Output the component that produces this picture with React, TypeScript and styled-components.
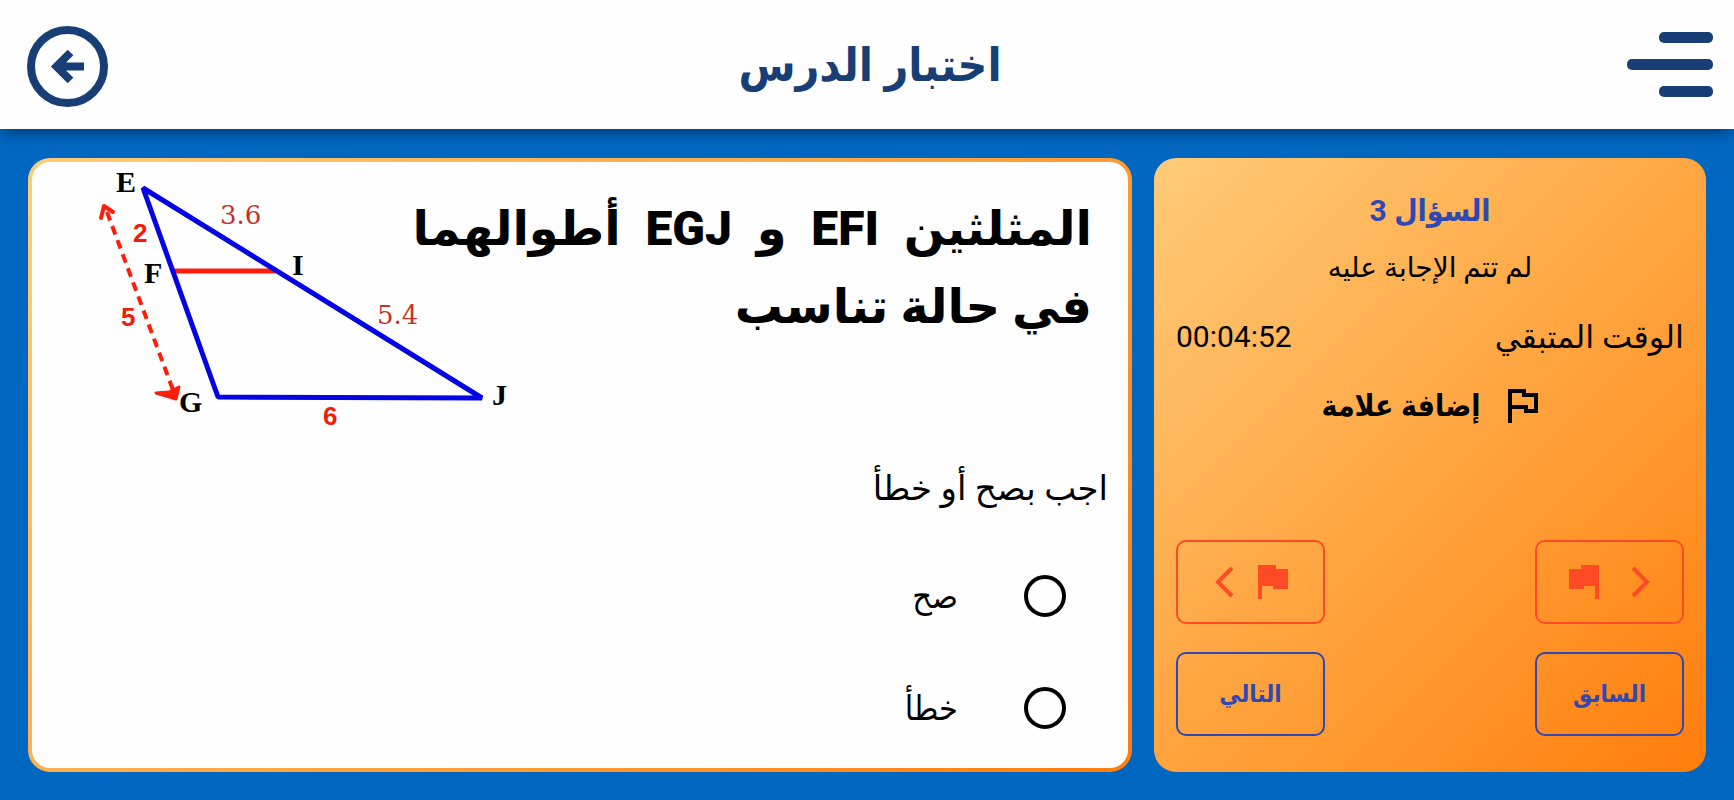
import React from "react";
import styled, { createGlobalStyle } from "styled-components";

const navy = "#173f75";
const indigo = "#3048b4";
const red = "#ff4a26";
const orangeGradient = "linear-gradient(135deg, #ffcb78 0%, #ff9a30 65%, #ff7d0c 100%)";
const wideFamily = 'Roboto, "DejaVu Sans", sans-serif';

const GlobalStyle = createGlobalStyle`
  *, *::before, *::after { box-sizing: border-box; }
  body {
    margin: 0;
    background: #0067c0;
    color: #000;
    font-family: Roboto, "DejaVu Sans Condensed", "DejaVu Sans", sans-serif;
  }
  h1, h2, h3, p { margin: 0; }
  button { font: inherit; cursor: pointer; }
`;

const Page = styled.div`
  display: flex;
  flex-direction: column;
  min-height: 100vh;
`;

const Header = styled.header`
  display: grid;
  grid-template-columns: 1fr auto 1fr;
  align-items: center;
  height: 129px;
  padding: 0 21px 0 27px;
  background: #fefefe;
  box-shadow: 0 8px 12px -4px rgba(0, 20, 50, 0.5);
`;

const Title = styled.h1`
  color: ${navy};
  font-size: 46px;
  line-height: 64px;
  font-weight: 700;
`;

const IconButton = styled.button<{ $end?: boolean }>`
  display: flex;
  padding: 0;
  border: 0;
  background: none;
  color: ${navy};
  justify-self: ${(p) => (p.$end ? "end" : "start")};
`;

const Content = styled.main`
  flex: 1;
  display: grid;
  grid-template-columns: minmax(0, 1fr) minmax(0, 2fr);
  gap: 22px;
  padding: 29px 28px 28px;
`;

const QuestionCard = styled.section`
  display: flex;
  flex-direction: column;
  border: 4px solid transparent;
  border-radius: 22px;
  background: linear-gradient(#fefefe, #fefefe) padding-box, ${orangeGradient} border-box;
`;

const Prompt = styled.div`
  display: grid;
  height: 296px;
`;

const Question = styled.h2`
  grid-area: 1 / 1;
  width: 62%;
  margin: 28px 36px 0 0;
  font-family: ${wideFamily};
  font-size: 48px;
  line-height: 78px;
  font-weight: 900;
`;

const QuestionLine = styled.span<{ $fill?: boolean }>`
  display: block;
  width: ${(p) => (p.$fill ? "100%" : "fit-content")};
  text-align-last: ${(p) => (p.$fill ? "justify" : "start")};
`;

const Figure = styled.svg`
  grid-area: 1 / 1;
  justify-self: end;
  margin-left: 62px;
`;

const PointName = styled.text`
  font: 700 30px "Liberation Serif", serif;
  fill: #000;
`;

const SideLength = styled.text<{ $serif?: boolean }>`
  font: ${(p) => (p.$serif ? '400 26px "DejaVu Serif", serif' : '700 26px "Liberation Sans", sans-serif')};
  fill: ${(p) => (p.$serif ? "#c8302c" : "#f01c08")};
`;

const Answers = styled.fieldset`
  margin: 0;
  padding: 0;
  border: 0;
`;

const Instruction = styled.legend`
  padding: 0 20px 0 0;
  margin-bottom: 22px;
  font-family: ${wideFamily};
  font-size: 34px;
  line-height: 60px;
`;

const Answer = styled.label`
  display: flex;
  align-items: center;
  gap: 66px;
  height: 112px;
  padding-right: 62px;
  font-size: 34px;
`;

const Radio = styled.input`
  appearance: none;
  width: 42px;
  height: 42px;
  margin: 0;
  border: 4px solid #000;
  border-radius: 50%;
  &:checked { background: radial-gradient(#000 45%, transparent 50%); }
`;

const SidePanel = styled.aside`
  display: flex;
  flex-direction: column;
  align-items: center;
  padding: 24px 22px 36px;
  border-radius: 22px;
  background: ${orangeGradient};
`;

const QuestionNumber = styled.h3`
  color: ${indigo};
  font-size: 30px;
  line-height: 58px;
  font-weight: 700;
`;

const Status = styled.p`
  font-family: ${wideFamily};
  font-size: 28px;
  line-height: 56px;
`;

const TimeRow = styled.div`
  align-self: stretch;
  display: flex;
  justify-content: space-between;
  font-size: 30px;
  line-height: 82px;
`;

const TimeLabel = styled.span`
  font-family: ${wideFamily};
  font-size: 32px;
`;

const FlagButton = styled.button`
  display: flex;
  align-items: center;
  gap: 28px;
  padding: 0;
  border: 0;
  background: none;
  color: #000;
  font-size: 30px;
  font-weight: 700;
  line-height: 56px;
`;

const NavGrid = styled.nav`
  align-self: stretch;
  display: grid;
  grid-template-columns: 149px 149px;
  justify-content: space-between;
  gap: 28px 0;
  margin-top: auto;
`;

const NavButton = styled.button<{ $tone: string; $gap?: number }>`
  display: flex;
  align-items: center;
  justify-content: center;
  gap: ${(p) => p.$gap ?? 24}px;
  height: 84px;
  padding: 0;
  border: 2px solid ${(p) => p.$tone};
  border-radius: 10px;
  background: none;
  color: ${(p) => p.$tone};
  font-size: 24px;
  font-weight: 700;
`;

const SolidFlag = ({ mirrored }: { mirrored?: boolean }) => (
  <svg width="30" height="34" viewBox="0 0 30 34" fill="currentColor" aria-hidden="true">
    <path d={mirrored ? "M30 0v34h-4V21H15v3H0V4h12V0z" : "M0 0v34h4V21h11v3h15V4H18V0z"} />
  </svg>
);

const Chevron = ({ left }: { left?: boolean }) => (
  <svg width="20" height="34" viewBox="0 0 20 34" fill="none" stroke="currentColor" strokeWidth="4" aria-hidden="true">
    <path d={left ? "M18 3 4 17l14 14" : "M2 3l14 14L2 31"} />
  </svg>
);

const TriangleFigure = () => (
  <Figure width="420" height="268" viewBox="93 162 420 268" direction="ltr" role="img" aria-label="EGJ, EFI">
    <path d="M173 271H275" stroke="#ff1c08" strokeWidth="5" />
    <path d="M142 188 217 397 481 398Z" fill="none" stroke="#0404e4" strokeWidth="5" strokeLinejoin="bevel" />
    <path d="M106 212 172 390" stroke="#ff1c08" strokeWidth="4" strokeDasharray="9 6" />
    <path d="M100 218 103 206 112 212" fill="none" stroke="#ff1c08" strokeWidth="4" strokeLinecap="round" strokeLinejoin="round" />
    <path d="M155 393 175 399 178 387 168 392Z" fill="#ff1c08" stroke="#ff1c08" strokeWidth="3" strokeLinejoin="round" />
    <PointName x="115" y="192">E</PointName>
    <PointName x="143" y="283">F</PointName>
    <PointName x="291" y="275">I</PointName>
    <PointName x="178" y="412">G</PointName>
    <PointName x="491" y="405">J</PointName>
    <SideLength x="132" y="242">2</SideLength>
    <SideLength x="120" y="326">5</SideLength>
    <SideLength x="322" y="425">6</SideLength>
    <SideLength $serif x="219" y="224">3.6</SideLength>
    <SideLength $serif x="376" y="324">5.4</SideLength>
  </Figure>
);

export default function App() {
  return (
    <>
      <GlobalStyle />
      <Page dir="rtl" lang="ar">
        <Header>
          <IconButton aria-label="القائمة">
            <svg width="86" height="66" viewBox="0 0 86 66" fill="currentColor">
              <rect x="32" y="0" width="54" height="11" rx="5" />
              <rect x="0" y="27" width="86" height="11" rx="5" />
              <rect x="32" y="54" width="54" height="11" rx="5" />
            </svg>
          </IconButton>
          <Title>اختبار الدرس</Title>
          <IconButton $end aria-label="رجوع">
            <svg width="81" height="85" viewBox="0 0 81 85" fill="none" stroke="currentColor" strokeWidth="8">
              <circle cx="40.5" cy="44.5" r="36.5" />
              <path d="M57 44.5H31M43.500 30.500 29.500 44.500l14 14" />
            </svg>
          </IconButton>
        </Header>
        <Content>
          <SidePanel>
            <QuestionNumber>السؤال 3</QuestionNumber>
            <Status>لم تتم الإجابة عليه</Status>
            <TimeRow>
              <TimeLabel>الوقت المتبقي</TimeLabel>
              <time>00:04:52</time>
            </TimeRow>
            <FlagButton>
              <svg width="30" height="34" viewBox="0 0 30 34" fill="none" stroke="currentColor" strokeWidth="4" aria-hidden="true">
                <path d="M2 34V2H16V6H28V22H18V18H2" />
              </svg>
              إضافة علامة
            </FlagButton>
            <NavGrid>
              <NavButton $tone={red} $gap={32} aria-label="العلامة السابقة">
                <Chevron />
                <SolidFlag mirrored />
              </NavButton>
              <NavButton $tone={red} aria-label="العلامة التالية">
                <SolidFlag />
                <Chevron left />
              </NavButton>
              <NavButton $tone={indigo}>السابق</NavButton>
              <NavButton $tone={indigo}>التالي</NavButton>
            </NavGrid>
          </SidePanel>
          <QuestionCard>
            <Prompt>
              <Question>
                <QuestionLine $fill>المثلثين EFI و EGJ أطوالهما</QuestionLine>
                <QuestionLine>في حالة تناسب</QuestionLine>
              </Question>
              <TriangleFigure />
            </Prompt>
            <Answers>
              <Instruction>اجب بصح أو خطأ</Instruction>
              <Answer>
                <Radio type="radio" name="answer" value="true" />
                <span>صح</span>
              </Answer>
              <Answer>
                <Radio type="radio" name="answer" value="false" />
                <span>خطأ</span>
              </Answer>
            </Answers>
          </QuestionCard>
        </Content>
      </Page>
    </>
  );
}
